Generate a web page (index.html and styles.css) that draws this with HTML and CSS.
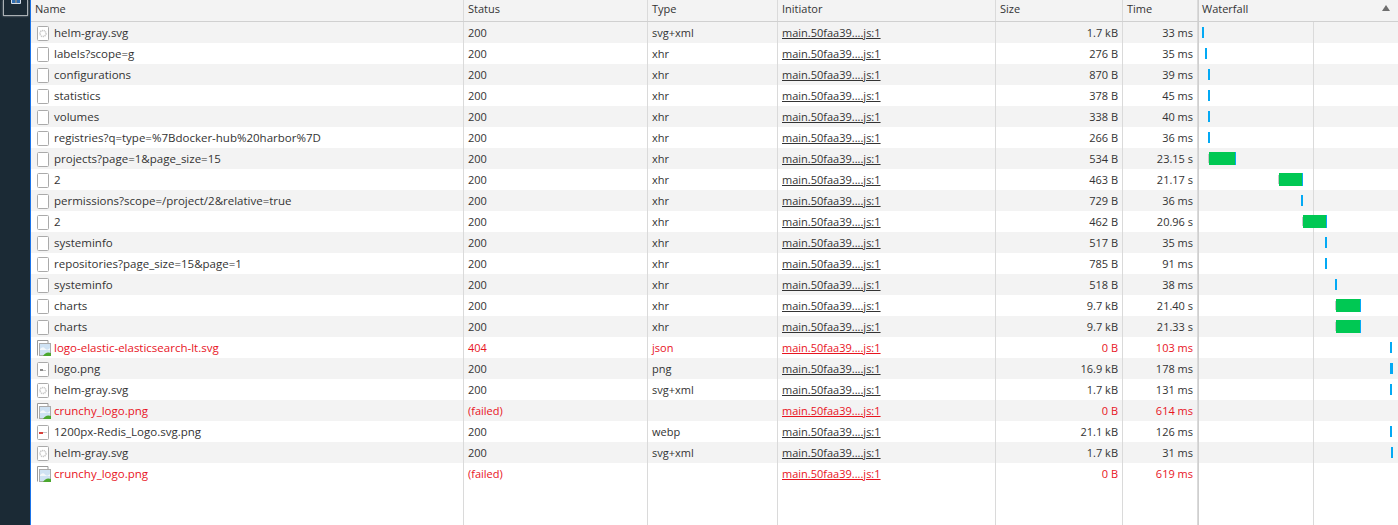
FILE: index.html
```html
<!DOCTYPE html>
<html lang="en">
<head>
  <meta charset="UTF-8">
  <meta name="viewport" content="width=device-width, initial-scale=1.0">
  <title>Network</title>
  <link rel="stylesheet" href="styles.css">
</head>
<body>
  <aside class="sidebar">
    <div class="tab-button">
      <svg class="tab-glyph" width="10" height="4" viewBox="0 0 10 4"><path d="M1 0h3v3H1zM6 0h3v3H6z" fill="#2f6db0"/><path d="M.5 0v3.500h9V0M5 0v3.500" fill="none" stroke="#d5deea"/></svg>
    </div>
  </aside>

  <main class="network">
    <div class="row head">
      <div class="cell">Name</div>
      <div class="cell">Status</div>
      <div class="cell">Type</div>
      <div class="cell">Initiator</div>
      <div class="cell">Size</div>
      <div class="cell">Time</div>
      <div class="cell fall-head">Waterfall<span class="sort-arrow"></span></div>
    </div>
    <div id="rows" class="rows"></div>
    <div class="row filler">
      <div class="cell"></div><div class="cell"></div><div class="cell"></div><div class="cell"></div><div class="cell"></div><div class="cell"></div><div class="cell fall"></div>
    </div>
  </main>

  <script>
    // name, icon, status, type, size, time, bar start, green width, failed, bar width
    const requests = [
      ["helm-gray.svg", "svg", "200", "svg+xml", "1.7 kB", "33 ms", 3, 0],
      ["labels?scope=g", "doc", "200", "xhr", "276 B", "35 ms", 6, 0],
      ["configurations", "doc", "200", "xhr", "870 B", "39 ms", 9, 0],
      ["statistics", "doc", "200", "xhr", "378 B", "45 ms", 9, 0],
      ["volumes", "doc", "200", "xhr", "338 B", "40 ms", 9, 0],
      ["registries?q=type=%7Bdocker-hub%20harbor%7D", "doc", "200", "xhr", "266 B", "36 ms", 9, 0],
      ["projects?page=1&page_size=15", "doc", "200", "xhr", "534 B", "23.15 s", 10, 26],
      ["2", "doc", "200", "xhr", "463 B", "21.17 s", 80, 23],
      ["permissions?scope=/project/2&relative=true", "doc", "200", "xhr", "729 B", "36 ms", 102, 0],
      ["2", "doc", "200", "xhr", "462 B", "20.96 s", 104, 23],
      ["systeminfo", "doc", "200", "xhr", "517 B", "35 ms", 126, 0],
      ["repositories?page_size=15&page=1", "doc", "200", "xhr", "785 B", "91 ms", 126, 0],
      ["systeminfo", "doc", "200", "xhr", "518 B", "38 ms", 136, 0],
      ["charts", "doc", "200", "xhr", "9.7 kB", "21.40 s", 137, 24],
      ["charts", "doc", "200", "xhr", "9.7 kB", "21.33 s", 137, 24],
      ["logo-elastic-elasticsearch-lt.svg", "broken", "404", "json", "0 B", "103 ms", 191, 0, true],
      ["logo.png", "logo", "200", "png", "16.9 kB", "178 ms", 191, 0, false, 3],
      ["helm-gray.svg", "svg", "200", "svg+xml", "1.7 kB", "131 ms", 191, 0],
      ["crunchy_logo.png", "broken", "(failed)", "", "0 B", "614 ms", -1, 0, true],
      ["1200px-Redis_Logo.svg.png", "redis", "200", "webp", "21.1 kB", "126 ms", 191, 0],
      ["helm-gray.svg", "svg", "200", "svg+xml", "1.7 kB", "31 ms", 192, 0],
      ["crunchy_logo.png", "broken", "(failed)", "", "0 B", "619 ms", -1, 0, true]
    ];

    const icons = {
      doc: '',
      svg: '<circle cx="6" cy="8.5" r="3" fill="none" stroke="#c8c8c8" stroke-width="1.600" stroke-dasharray="1.200 .6"/>',
      logo: '<rect x="3" y="8" width="3" height="2" fill="#8a8a8a"/><rect x="6" y="9" width="3" height="1" fill="#c4c4c4"/>',
      redis: '<rect x="2" y="8" width="4" height="2" fill="#d8403a"/><rect x="6" y="8" width="4" height="1" fill="#c8c8c8"/>'
    };

    function fileIcon(kind) {
      if (kind === 'broken') {
        return `<svg class="icon" width="14" height="16" viewBox="0 0 14 16">
          <path d="M.5 15.500V.5h10.500v2.500" fill="#fff" stroke="#999"/>
          <rect x="2.500" y="3.500" width="11" height="12" fill="#cfe2f3" stroke="#aaa"/>
          <path d="M3 9q3-3 5-.5t5-.5v2H3z" fill="#f4f8fb"/>
          <path d="M6 16q3-5 8-3v3z" fill="#4ba82e"/>
        </svg>`;
      }
      return `<svg class="icon" width="14" height="16" viewBox="0 0 14 16">
        <rect x=".5" y="1.500" width="11" height="14" rx="1" fill="#fff" stroke="#aaa"/>${icons[kind]}
      </svg>`;
    }

    function waterfall(req) {
      const start = req[6], green = req[7], wide = req[9] || 2;
      if (start < 0) return '';
      if (green) {
        return `<span class="wait" style="margin-left:${start - 1}px"></span><span class="bar-green" style="width:${green}px"></span><span class="bar-tail"></span>`;
      }
      return `<span class="bar-blue" style="margin-left:${start}px;width:${wide}px"></span>`;
    }

    document.getElementById('rows').innerHTML = requests.map(req => `
      <div class="row${req[8] ? ' failed' : ''}">
        <div class="cell name">${fileIcon(req[1])}<span>${req[0].replace(/&/g, '&amp;')}</span></div>
        <div class="cell">${req[2]}</div>
        <div class="cell">${req[3]}</div>
        <div class="cell"><a class="initiator" href="#">main.50faa39....js:1</a></div>
        <div class="cell num">${req[4]}</div>
        <div class="cell num">${req[5]}</div>
        <div class="cell fall">${waterfall(req)}</div>
      </div>`).join('');
  </script>
</body>
</html>
```
FILE: styles.css
```css
html, body {
  height: 100%;
}
body {
  margin: 0;
  display: flex;
  overflow: hidden;
  font-family: "Open Sans", sans-serif;
  font-size: 11px;
  color: #333;
  background: #fff;
}
.sidebar {
  width: 30px;
  flex-shrink: 0;
  background: #1b2a35;
}
.tab-button {
  width: 25px;
  height: 16px;
  margin-left: 3px;
  border: 1px solid #aab0b4;
  border-top: none;
  box-shadow: 0 0 2px #8a9299;
  display: flex;
  justify-content: center;
  box-sizing: border-box;
}
.tab-glyph {
  display: block;
  margin-left: 1px;
}
.network {
  flex: 1;
  min-width: 0;
  display: flex;
  flex-direction: column;
  border-left: 1px solid #1a73e8;
}
.row {
  display: grid;
  grid-template-columns: 433px 184px 130px 218px 127px 75px 1fr;
  height: 21px;
  line-height: 21px;
}
.rows .row:nth-child(odd) {
  background: #f3f3f3;
}
.cell {
  border-right: 1px solid #dadada;
  padding-left: 4px;
  white-space: nowrap;
  overflow: hidden;
}
.head {
  height: 22px;
  background: #f3f3f3;
  border-bottom: 1px solid #d0d0d0;
  box-sizing: border-box;
}
.head .cell {
  line-height: 17px;
  padding-left: 4px;
}
.head .fall-head {
  position: relative;
  border-right: none;
  border-left: 1px solid #cfcfcf;
  padding-left: 3px;
}
.sort-arrow {
  position: absolute;
  right: 8px;
  top: 5px;
  border-left: 4px solid transparent;
  border-right: 4px solid transparent;
  border-bottom: 6px solid #6e6e6e;
}
.cell.name {
  display: flex;
  align-items: center;
  gap: 3px;
  padding-left: 6px;
  font-size: 11.5px;
}
.icon {
  flex-shrink: 0;
}
.cell.num {
  text-align: right;
  padding-right: 4px;
}
.initiator {
  color: #333;
  text-decoration: underline;
}
.failed, .failed .initiator {
  color: #e8141e;
}
.cell.fall {
  border-right: none;
  border-left: 1px solid #cfcfcf;
  padding-left: 0;
  display: flex;
  align-items: center;
  background: linear-gradient(#dadada, #dadada) 114px 0 / 1px 100% no-repeat;
}
.bar-blue, .bar-tail {
  display: block;
  height: 11px;
  background: #03a9f4;
}
.bar-tail {
  width: 1px;
  height: 13px;
}
.bar-green {
  display: block;
  height: 13px;
  background: #00c853;
}
.wait {
  display: block;
  width: 1px;
  height: 9px;
  background: #c8c8c8;
}
.filler {
  flex: 1;
  height: auto;
}
```
